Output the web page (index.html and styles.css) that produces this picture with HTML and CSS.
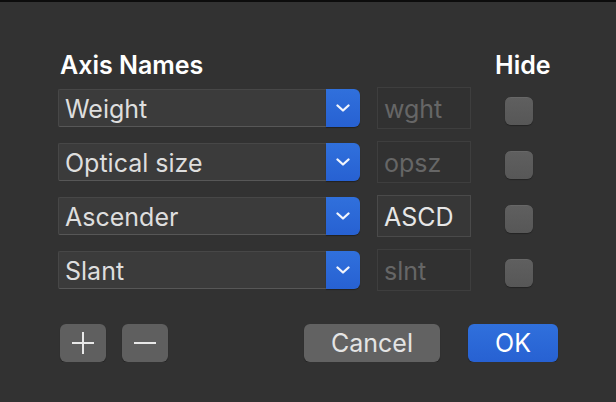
FILE: index.html
```html
<!DOCTYPE html>
<html lang="en">
<head>
    <meta charset="UTF-8">
    <title>Axis Names</title>
    <link rel="stylesheet" href="styles.css">
</head>
<body>

    <div class="dialog">
        <!-- Column headings -->
        <div class="axes-head">
            <div class="heading">Axis Names</div>
            <div></div>
            <div class="heading hide-label">Hide</div>
        </div>

        <!-- Axis rows -->
        <div class="axes">
            <div class="popup">
                <span class="popup-label">Weight</span>
                <span class="popup-arrow">
                    <svg width="14" height="8" viewBox="0 0 14 8"><path d="M1.5 1.5 L7 6.5 L12.5 1.5" /></svg>
                </span>
            </div>
            <div class="tag disabled">wght</div>
            <div class="check"><span class="box"></span></div>

            <div class="popup">
                <span class="popup-label">Optical size</span>
                <span class="popup-arrow">
                    <svg width="14" height="8" viewBox="0 0 14 8"><path d="M1.5 1.5 L7 6.5 L12.5 1.5" /></svg>
                </span>
            </div>
            <div class="tag disabled">opsz</div>
            <div class="check"><span class="box"></span></div>

            <div class="popup">
                <span class="popup-label">Ascender</span>
                <span class="popup-arrow">
                    <svg width="14" height="8" viewBox="0 0 14 8"><path d="M1.5 1.5 L7 6.5 L12.5 1.5" /></svg>
                </span>
            </div>
            <div class="tag">ASCD</div>
            <div class="check"><span class="box"></span></div>

            <div class="popup">
                <span class="popup-label">Slant</span>
                <span class="popup-arrow">
                    <svg width="14" height="8" viewBox="0 0 14 8"><path d="M1.5 1.5 L7 6.5 L12.5 1.5" /></svg>
                </span>
            </div>
            <div class="tag disabled">slnt</div>
            <div class="check"><span class="box"></span></div>
        </div>

        <!-- Buttons -->
        <div class="footer">
            <div class="group">
                <button class="btn icon-btn">
                    <svg width="24" height="24" viewBox="0 0 24 24"><path d="M1 12 H23 M12 1 V23" /></svg>
                </button>
                <button class="btn icon-btn">
                    <svg width="24" height="24" viewBox="0 0 24 24"><path d="M1 12 H23" /></svg>
                </button>
            </div>
            <div class="group right">
                <button class="btn cancel-btn">Cancel</button>
                <button class="btn ok-btn">OK</button>
            </div>
        </div>
    </div>

</body>
</html>
```

FILE: styles.css
```css
/* Basic Page Styling */
body {
    margin: 0;
    background-color: #323232;
    border-top: 2px solid #0c0c0c;
    font-family: Inter, "Liberation Sans", sans-serif;
    font-size: 25px;
    color: #e2e2e2;
}
.dialog {
    width: 500px;
    padding: 48px 58px 0 58px;
}
/* Columns */
.axes-head, .axes {
    display: grid;
    grid-template-columns: 302px 94px 61px;
    column-gap: 17px;
}
.axes-head {
    height: 30px;
    margin-bottom: 7px;
}
.heading {
    line-height: 30px;
    font-weight: 600;
    color: #ffffff;
    padding-left: 2px;
}
.hide-label {
    padding-left: 7px;
}
.axes {
    grid-auto-rows: 42px;
    row-gap: 12px;
}
/* Popup menu */
.popup {
    align-self: center;
    height: 38px;
    display: flex;
    box-sizing: border-box;
}
.popup-label {
    flex: 1;
    background-color: #3b3b3b;
    border: 1px solid #474747;
    border-bottom-color: #575757;
    border-right: none;
    border-radius: 2px 0 0 2px;
    padding: 3px 0 0 6px;
    line-height: 33px;
    color: #dedede;
}
.popup-arrow {
    width: 34px;
    background: linear-gradient(#3070dc, #2761d2);
    border-radius: 0 6px 6px 0;
    display: flex;
    align-items: center;
    justify-content: center;
    box-shadow: 0 1px 1px rgba(0, 0, 0, 0.35);
}
.popup-arrow svg path {
    fill: none;
    stroke: #f2f5fc;
    stroke-width: 2.3;
    stroke-linecap: round;
    stroke-linejoin: round;
}
/* Tag field */
.tag {
    box-sizing: border-box;
    height: 42px;
    background-color: #373737;
    border: 1px solid #4a4a4a;
    padding: 3px 0 0 6px;
    line-height: 37px;
    color: #e6e6e6;
}
.tag.disabled {
    background-color: #313131;
    border-color: #3e3e3e;
    color: #666666;
}
/* Checkbox */
.check {
    display: flex;
    align-items: flex-start;
    justify-content: center;
    padding-top: 10px;
}
.box {
    width: 28px;
    height: 28px;
    box-sizing: border-box;
    border-radius: 6px;
    background: linear-gradient(#5f5f5f, #575757);
    border-top: 1px solid #676767;
    box-shadow: 0 1px 1px rgba(0, 0, 0, 0.3);
}
/* Button Styling */
.footer {
    display: flex;
    justify-content: space-between;
    margin-top: 33px;
}
.group {
    display: flex;
    gap: 16px;
    margin-left: 2px;
}
.group.right {
    gap: 28px;
    margin-left: 0;
}
.btn {
    height: 38px;
    border: none;
    border-radius: 6px;
    font-family: inherit;
    font-size: 25px;
    color: #e4e4e4;
    background-color: #5f5f5f;
    padding: 0;
    box-shadow: 0 1px 1px rgba(0, 0, 0, 0.35);
}
.icon-btn {
    width: 46px;
    display: flex;
    align-items: center;
    justify-content: center;
}
.icon-btn svg path {
    fill: none;
    stroke: #e8e8e8;
    stroke-width: 2;
}
.cancel-btn {
    width: 136px;
    background-color: #626262;
}
.ok-btn {
    width: 90px;
    background: linear-gradient(#3070dc, #2761d2);
    color: #ffffff;
}
```
